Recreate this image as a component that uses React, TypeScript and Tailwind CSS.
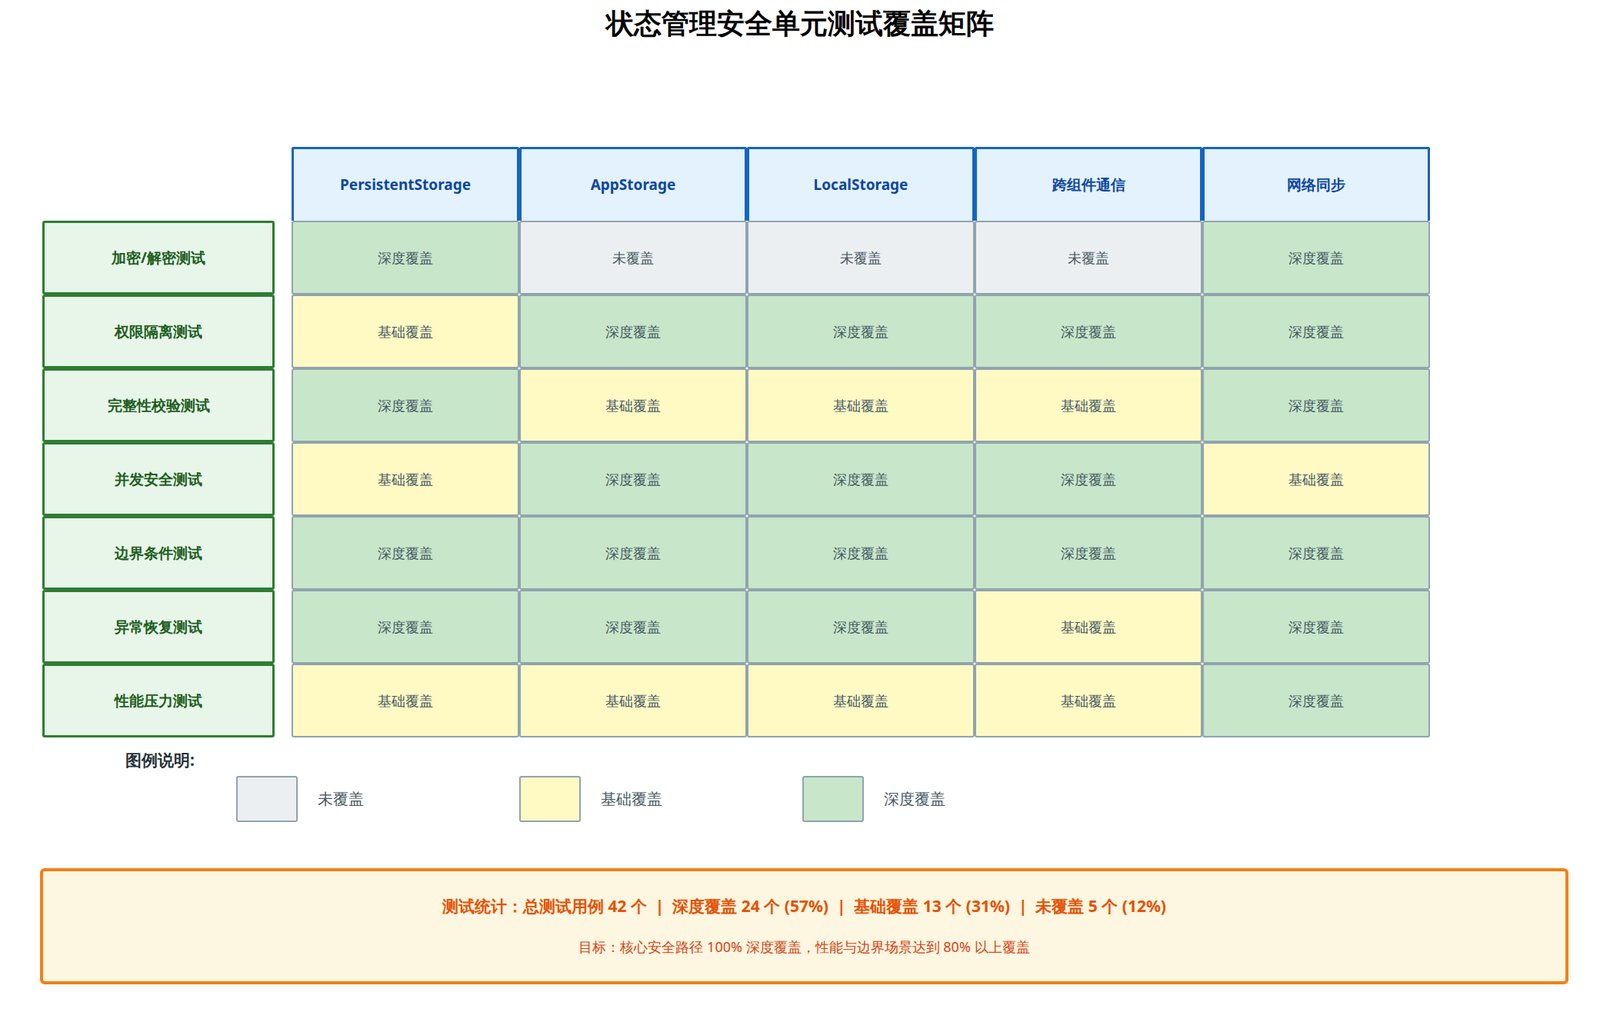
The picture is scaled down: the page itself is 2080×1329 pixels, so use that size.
const COLS = ["PersistentStorage", "AppStorage", "LocalStorage", "跨组件通信", "网络同步"];
const ROWS: [string, number[]][] = [
  ["加密/解密测试", [2, 0, 0, 0, 2]],
  ["权限隔离测试", [1, 2, 2, 2, 2]],
  ["完整性校验测试", [2, 1, 1, 1, 2]],
  ["并发安全测试", [1, 2, 2, 2, 1]],
  ["边界条件测试", [2, 2, 2, 2, 2]],
  ["异常恢复测试", [2, 2, 2, 1, 2]],
  ["性能压力测试", [1, 1, 1, 1, 2]],
];
const LEVELS = [
  { label: "未覆盖", cls: "bg-[#eceff1]" },
  { label: "基础覆盖", cls: "bg-[#fff9c4]" },
  { label: "深度覆盖", cls: "bg-[#c8e6c9]" },
];
const sans = "font-['DejaVu_Sans','Noto_Sans_CJK_SC',sans-serif]";
const serif = "font-['DejaVu_Serif','Noto_Sans_CJK_SC',serif]";

export default function App() {
  return (
    <div className={`w-[2080px] h-[1329px] bg-white relative ${sans}`}>
      <h1 className={`text-center pt-[8px] text-[36px] leading-[44px] font-bold text-black ${serif}`}>
        状态管理安全单元测试覆盖矩阵
      </h1>
      <div className="flex mt-[139px] ml-[55px]">
        <div className="w-[302px] flex flex-col">
          <div className="h-[96px]" />
          {ROWS.map(([name]) => (
            <div
              key={name}
              className={`h-[96px] border-[3px] border-[#2e7d32] rounded-[3px] bg-[#e8f5e9] flex items-center justify-center text-[19px] font-bold text-[#1b5e20] ${serif}`}
            >
              {name}
            </div>
          ))}
        </div>
        <div className="ml-[22px] flex flex-col">
          <div className="flex">
            {COLS.map((c) => (
              <div
                key={c}
                className="w-[296px] h-[96px] border-[3px] border-b-0 border-[#1565c0] rounded-t-[3px] bg-[#e3f2fd] flex items-center justify-center text-[19px] font-bold text-[#0d47a1]"
              >
                {c}
              </div>
            ))}
          </div>
          {ROWS.map(([name, vals]) => (
            <div key={name} className="flex">
              {vals.map((v, i) => (
                <div
                  key={i}
                  className={`w-[296px] h-[96px] border-2 border-[#90a4ae] rounded-[3px] ${LEVELS[v].cls} flex items-center justify-center text-[18px] text-[#455a64] ${serif}`}
                >
                  {LEVELS[v].label}
                </div>
              ))}
            </div>
          ))}
        </div>
      </div>
      <div className={`ml-[163px] mt-[14px] text-[21px] font-bold text-[#263238] ${serif}`}>图例说明:</div>
      <div className="flex ml-[307px] mt-[4px]">
        {LEVELS.map((l) => (
          <div key={l.label} className="w-[368px] flex items-center">
            <div className={`w-[80px] h-[60px] border-2 border-[#90a4ae] rounded-[3px] ${l.cls}`} />
            <span className="ml-[26px] text-[20px] text-[#455a64]">{l.label}</span>
          </div>
        ))}
      </div>
      <div className="mx-[52px] mt-[60px] w-[1987px] h-[151px] border-[4px] border-[#f57f17] rounded-[6px] bg-[#fdf6e0] flex flex-col items-center justify-center">
        <div className="text-[21px] font-bold text-[#e65100]">
          测试统计：总测试用例 42 个 &nbsp;|&nbsp; 深度覆盖 24 个 (57%) &nbsp;|&nbsp; 基础覆盖 13 个 (31%) &nbsp;|&nbsp; 未覆盖 5 个 (12%)
        </div>
        <div className="mt-[24px] text-[18px] text-[#d84315]">
          目标：核心安全路径 100% 深度覆盖，性能与边界场景达到 80% 以上覆盖
        </div>
      </div>
    </div>
  );
}
